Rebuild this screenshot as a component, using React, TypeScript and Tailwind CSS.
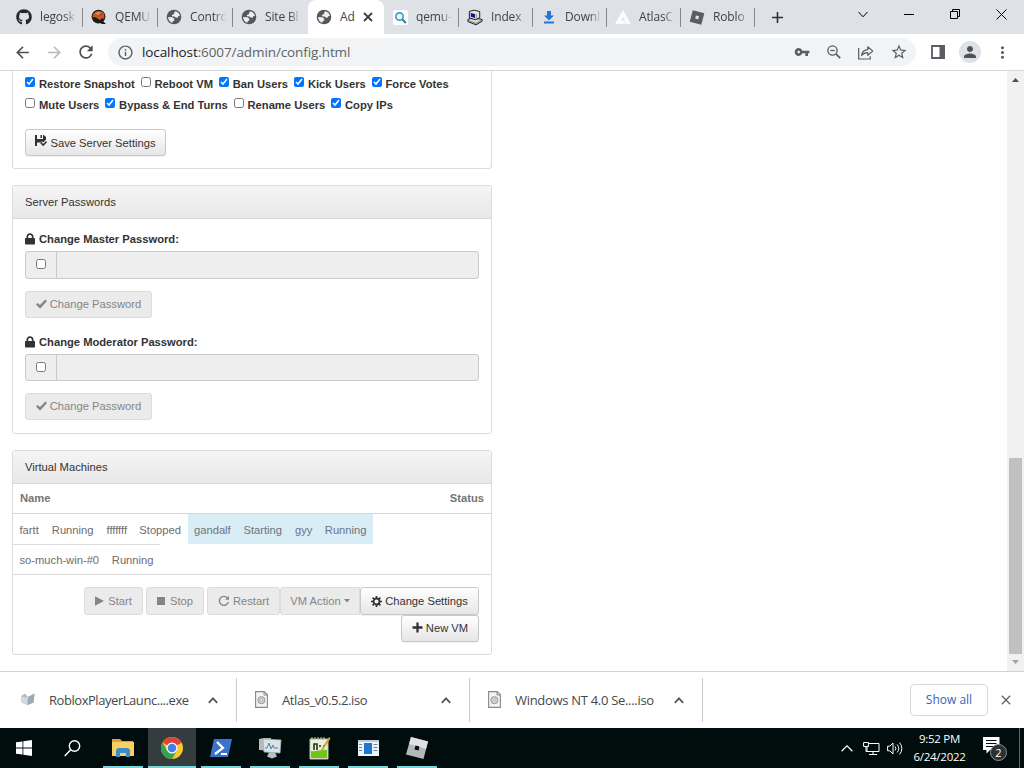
import { ReactNode } from "react";
import clsx from "clsx";
import { FaGithub } from "react-icons/fa";
import {
  MdAdd,
  MdArrowBack,
  MdArrowForward,
  MdClose,
  MdInfoOutline,
  MdMoreVert,
  MdPerson,
  MdRefresh,
  MdStarBorder,
  MdVpnKey,
} from "react-icons/md";

/* ---------- favicons ---------- */

const GlobeIcon = () => (
  <svg width="16" height="16" viewBox="0 0 16 16">
    <circle cx="8" cy="8" r="7.300" fill="#54575b" />
    <path d="M8.800 2.300c2.700.2 4.700 2 5.100 4.700l-1.700.3-.6 1.500-2.200-.2-.7-1.100H6.300L5.700 6l1.700-.6.8-1.200z" fill="#eceef0" />
    <path d="M2.100 8l4.300.3 1.900 1.500v1.700l-1.700.7v1.600C4.200 13.300 2.200 11.200 2.100 8z" fill="#eceef0" />
  </svg>
);

const QemuIcon = () => (
  <svg width="17" height="16" viewBox="0 0 17 16">
    <circle cx="8" cy="7.6" r="7.4" fill="#1d1a18" />
    <path d="M9 9l7 6.5h-5z" fill="#1d1a18" />
    <path d="M2 5.500C4 1.500 9 .6 12.500 3c2 1.500 2.300 4.500 1.300 6.500L11 9.500l-1.500 2L7 9.500 4 8 2 8.500C1.500 7.500 1.500 6.800 2 5.500z" fill="#c8562a" />
    <path d="M4 4.500c2-2 5-2.300 7-.8L8.500 5.500z" fill="#e58a4e" />
    <circle cx="10.500" cy="5.200" r="0.700" fill="#1d1a18" />
  </svg>
);

const QemuSearchIcon = () => (
  <svg width="15" height="15" viewBox="0 0 15 15">
    <rect width="15" height="15" rx="2" fill="#fff" />
    <circle cx="6.500" cy="6.500" r="3.700" fill="#eaf6fb" stroke="#3f9fc6" strokeWidth="1.700" />
    <path d="M9.300 9.300l3.500 3.700" stroke="#2b86ad" strokeWidth="2" />
  </svg>
);

const ComputerIcon = () => (
  <svg width="17" height="17" viewBox="0 0 17 17">
    <path d="M1 10.500l5-1.500 10 1.500v2l-6.500 3.800L1 12.800z" fill="#d9d9d9" stroke="#111" />
    <path d="M2.500 2L8 .7l5.500 1.500v6.500L9 10.800 2.500 9z" fill="#e4e4e4" stroke="#111" />
    <path d="M4 3.700l4.500 1v4.200L4 7.800z" fill="#14149a" />
    <path d="M9.800 4.600v6" stroke="#555" strokeWidth="0.700" />
    <path d="M2 12l7.500 2.800 6-3.500" fill="none" stroke="#555" strokeWidth="0.700" />
  </svg>
);

const DownloadIcon = () => (
  <svg width="10" height="13" viewBox="0 0 10 13">
    <path d="M3 0h4v4.500h3L5 9.500 0 4.500h3z" fill="#2477d4" />
    <rect y="10.500" width="10" height="2" fill="#2477d4" />
  </svg>
);

const AtlasIcon = () => (
  <svg width="16" height="14" viewBox="0 0 16 14">
    <path d="M8 0l8 14h-4.600L8 7.200 6 10.500h3.200l1.400 3.500H0z" fill="#fbfcfd" />
  </svg>
);

const RobloxTabIcon = () => (
  <svg width="17" height="17" viewBox="0 0 17 17">
    <path d="M4 .8l12.300 3.300L13 16.200.8 12.900z" fill="#5b5d60" />
    <path d="M7.400 6.300l3.300.9-.9 3.300-3.300-.9z" fill="#dee1e6" />
  </svg>
);

type Tab = { title: string; icon: ReactNode; width: string; divider?: boolean };

const tabs: Tab[] = [
  { title: "legosk", icon: <FaGithub className="size-4 text-[#24292f]" />, width: "w-[75px]", divider: true },
  { title: "QEMU", icon: <QemuIcon />, width: "w-[75px]", divider: true },
  { title: "Contro", icon: <GlobeIcon />, width: "w-[75px]", divider: true },
  { title: "Site Bl", icon: <GlobeIcon />, width: "w-[75px]" },
  { title: "Ad", icon: <GlobeIcon />, width: "w-[76px]" },
  { title: "qemu-", icon: <QemuSearchIcon />, width: "w-[75px]", divider: true },
  { title: "Index", icon: <ComputerIcon />, width: "w-[74px]", divider: true },
  { title: "Downl", icon: <DownloadIcon />, width: "w-[74px]", divider: true },
  { title: "AtlasC", icon: <AtlasIcon />, width: "w-[74px]", divider: true },
  { title: "Roblo", icon: <RobloxTabIcon />, width: "w-[74px]", divider: true },
];

const TabStrip = () => (
  <div className="flex h-[34px] bg-[#dee1e6] pl-2">
    {tabs.map((tab, i) => {
      const active = i === 4;
      return (
        <div
          key={tab.title}
          className={clsx(
            "flex shrink-0 items-center pl-2",
            tab.width,
            active && "rounded-t-lg bg-white"
          )}
        >
          <span className="flex w-[16px] shrink-0 justify-center">{tab.icon}</span>
          <span
            className={clsx(
              "ml-[8px] shrink-0 text-[12px] leading-4 tracking-[-0.15px] whitespace-nowrap text-[#3f4347]",
              active
                ? "w-[15px]"
                : "w-[37px] [mask-image:linear-gradient(to_right,#000_65%,transparent_98%)]"
            )}
          >
            {tab.title}
          </span>
          {active && (
            <svg width="10" height="10" viewBox="0 0 10 10" className="ml-[8px] shrink-0">
              <path d="M1 1l8 8M9 1L1 9" stroke="#3c4043" strokeWidth="1.800" />
            </svg>
          )}
          {tab.divider && <span className="ml-auto h-[19px] w-px bg-[#85888d]" />}
        </div>
      );
    })}
    <div className="flex w-[44px] items-center justify-center">
      <MdAdd className="size-[19px] text-[#2d3033]" />
    </div>
    <div className="mr-[17px] ml-auto flex h-7 items-center text-black">
      <svg width="10" height="7" viewBox="0 0 10 7" className="mr-[36px]">
        <path d="M.5 1L5 5.800 9.500 1" fill="none" stroke="currentColor" />
      </svg>
      <svg width="10" height="2" viewBox="0 0 10 2" className="mr-[36px]">
        <path d="M0 1.500h10" stroke="currentColor" />
      </svg>
      <svg width="10" height="10" viewBox="0 0 10 10" className="mr-[36px]">
        <path d="M.5 2.500h7v7h-7zM2.500 2.500v-2h7v7h-2" fill="none" stroke="currentColor" />
      </svg>
      <svg width="11" height="11" viewBox="0 0 11 11">
        <path d="M.5.5l10 10M10.500.5l-10 10" fill="none" stroke="currentColor" />
      </svg>
    </div>
  </div>
);

const Toolbar = () => (
  <div className="flex h-[37px] items-center border-b border-[#d5d7da] bg-white pl-[13px] text-[#5a5d61]">
    <MdArrowBack className="size-[19px] text-[#4b4e52]" />
    <MdArrowForward className="ml-[13px] size-[19px] text-[#b7b9bc]" />
    <MdRefresh className="ml-[12px] size-[20px] text-[#4b4e52]" />
    <div className="ml-[12px] flex h-7 w-[808px] items-center rounded-full bg-[#f1f3f4] pl-[9px]">
      <MdInfoOutline className="size-[17px]" />
      <span className="ml-[8px] text-[13.500px] tracking-[-0.1px] text-[#5f6368]">
        <span className="text-[#202124]">localhost</span>:6007/admin/config.html
      </span>
      <MdVpnKey className="ml-auto size-[16px]" />
      <svg width="14" height="14" viewBox="0 0 14 14" className="ml-[17px]">
        <g fill="none" stroke="currentColor" strokeWidth="1.300">
          <circle cx="5.500" cy="5.500" r="4.600" />
          <path d="M3.300 5.500h4.400" />
          <path d="M8.900 8.900l4.300 4.300" strokeWidth="1.700" />
        </g>
      </svg>
      <svg width="16" height="15" viewBox="0 0 16 15" className="ml-[17px]">
        <g fill="none" stroke="currentColor" strokeWidth="1.200">
          <path d="M.7 3v11h11.500v-2.800" />
          <path d="M3.600 10.500C4 6.500 6.500 4.800 9.800 4.600V1.800l5 4.300-5 4.200V7.700C7 7.700 5 8.500 3.600 10.500z" strokeLinejoin="round" />
        </g>
      </svg>
      <MdStarBorder className="mr-[8px] ml-[16px] size-[18px]" />
    </div>
    <svg width="14" height="14" viewBox="0 0 14 14" className="ml-[15px]">
      <path d="M1 1h12v12H1z" fill="none" stroke="currentColor" strokeWidth="1.800" />
      <path d="M8.500 0H14v14H8.500z" fill="currentColor" />
    </svg>
    <div className="ml-[14px] flex size-[22px] items-center justify-center rounded-full bg-[#dee1e6]">
      <MdPerson className="size-[18px] text-[#4d535c]" />
    </div>
    <MdMoreVert className="ml-[12px] size-[19px]" />
  </div>
);

/* ---------- glyphs used by the panel buttons ---------- */

const SavedGlyph = () => (
  <svg width="12" height="12" viewBox="0 0 12 12" fill="currentColor">
    <path d="M0 0h2v4h6V0h.8L11 2v2.500L8.200 7.500 7 6.300 5.500 7.500H2V11H0z" />
    <path d="M5.500 0H7v3H5.500zM5.200 8.300l1.300-1.200 1.700 1.800L11 6l1 1.200-3.800 4.100z" />
  </svg>
);

const LockGlyph = () => (
  <svg width="10" height="12" viewBox="0 0 10 12" fill="currentColor">
    <path d="M1.500 5V3.600C1.500 1.500 3 .2 5 .2s3.500 1.300 3.500 3.400V5H9.500l.5.500V11l-.5.500H.5L0 11V5.500L.5 5zM3.200 5h3.600V3.600C6.800 2.500 6 1.900 5 1.900s-1.800.6-1.800 1.700z" />
  </svg>
);

const OkGlyph = () => (
  <svg width="11" height="10" viewBox="0 0 11 10" fill="currentColor">
    <path d="M9.300.5L11 2 4.500 9.300H3.700L0 5.600l1.700-1.700L4 6z" />
  </svg>
);

const PlayGlyph = () => (
  <svg width="9" height="10" viewBox="0 0 9 10" fill="currentColor">
    <path d="M0 .3L9 5 0 9.700z" />
  </svg>
);

const StopGlyph = () => <span className="size-[8px] bg-current" />;

const RepeatGlyph = () => (
  <svg width="12" height="12" viewBox="0 0 12 12">
    <path d="M9.400 3A4.500 4.500 0 1 0 10.300 6.800" fill="none" stroke="currentColor" strokeWidth="1.400" />
    <path d="M11 .8v4H7.200z" fill="currentColor" />
  </svg>
);

const CogGlyph = () => (
  <svg width="11" height="11" viewBox="0 0 11 11">
    <circle cx="5.500" cy="5.500" r="3" fill="none" stroke="currentColor" strokeWidth="1.800" />
    <path
      d="M5.500 0v2M5.500 9v2M0 5.500h2M9 5.500h2M1.600 1.600L3 3M8 8l1.400 1.400M9.400 1.600L8 3M3 8L1.600 9.400"
      stroke="currentColor"
      strokeWidth="1.700"
    />
  </svg>
);

const PlusGlyph = () => (
  <svg width="11" height="11" viewBox="0 0 11 11">
    <path d="M5.500.5v10M.5 5.500h10" stroke="currentColor" strokeWidth="2.300" />
  </svg>
);

const Button = ({
  children,
  disabled,
  className,
}: {
  children: ReactNode;
  disabled?: boolean;
  className?: string;
}) => (
  <button
    type="button"
    disabled={disabled}
    className={clsx(
      "flex shrink-0 items-center justify-center gap-[3px] rounded-[3px] border whitespace-nowrap",
      disabled
        ? "border-[#dcdcdc] bg-[#ebebeb] text-[#858585]"
        : "border-[#c8c8c8] bg-linear-to-b from-white to-[#e6e6e6] text-[#333] shadow-[0_1px_1px_rgba(0,0,0,0.06)]",
      className
    )}
  >
    {children}
  </button>
);

const Check = ({ label, checked }: { label: string; checked?: boolean }) => (
  <label className="flex items-center gap-[4px] font-bold">
    <input type="checkbox" defaultChecked={checked} className="mt-0 mr-0 mb-[3px] ml-0 size-[10px]" />
    {label}
  </label>
);

const Heading = ({ children }: { children: ReactNode }) => (
  <div className="flex h-[33px] items-center border-b border-[#d9d9d9] bg-linear-to-b from-[#f5f5f5] to-[#e8e8e8] pb-px pl-3 text-[#333]">
    {children}
  </div>
);

const PasswordField = ({ label, height }: { label: string; height: string }) => (
  <div>
    <div className="flex h-[16px] items-center gap-[4px] font-bold">
      <LockGlyph />
      {label}
    </div>
    <div className={clsx("mt-[4px] flex rounded-[3px] border border-[#cacaca] bg-[#eee]", height)}>
      <div className="flex w-[31px] items-center justify-center border-r border-[#cacaca] pb-[2px]">
        <input type="checkbox" className="m-0 size-[10px]" />
      </div>
    </div>
    <Button disabled className="mt-[12px] h-[27px] w-[127px] pb-[2px]">
      <OkGlyph /> Change Password
    </Button>
  </div>
);

const VmCells = ({ name, status, width }: { name: string; status: string; width: string }) => (
  <div className={clsx("flex items-center justify-between px-[6.500px] pt-px", width)}>
    <span>{name}</span>
    <span>{status}</span>
  </div>
);

const AdminPage = () => (
  <main className="flex w-[1007px] flex-col bg-white pl-3 font-['Liberation_Sans',Arial,sans-serif] text-[11.2px] leading-4 text-[#333]">
    <section className="h-[98px] w-[480px] rounded-b-[3px] border border-t-0 border-[#dcdcdc] px-3 pt-[2px]">
      <div className="flex h-[21px] items-center gap-[5.800px]">
        <Check label="Restore Snapshot" checked />
        <Check label="Reboot VM" />
        <Check label="Ban Users" checked />
        <Check label="Kick Users" checked />
        <Check label="Force Votes" checked />
      </div>
      <div className="flex h-[21px] items-center gap-[5.800px]">
        <Check label="Mute Users" />
        <Check label="Bypass & End Turns" checked />
        <Check label="Rename Users" />
        <Check label="Copy IPs" checked />
      </div>
      <Button className="mt-[14px] h-[27px] w-[141px]">
        <span className="-mt-[3px]">
          <SavedGlyph />
        </span>
        Save Server Settings
      </Button>
    </section>

    <section className="mt-4 h-[249px] w-[480px] rounded-[3px] border border-[#dcdcdc]">
      <Heading>Server Passwords</Heading>
      <div className="flex flex-col gap-[16px] px-3 pt-[12px]">
        <PasswordField label="Change Master Password:" height="h-[28px]" />
        <PasswordField label="Change Moderator Password:" height="h-[27px]" />
      </div>
    </section>

    <section className="mt-4 h-[205px] w-[480px] rounded-[3px] border border-[#dcdcdc]">
      <Heading>Virtual Machines</Heading>
      <div className="text-[#6d6d6d]">
        <div className="flex h-[30px] items-center justify-between border-b border-[#d5d5d5] px-[7px] pb-px font-bold text-[#757575]">
          <span>Name</span>
          <span>Status</span>
        </div>
        <div className="flex h-[30px]">
          <div className="flex">
            <VmCells name="fartt" status="Running" width="w-[87px]" />
            <VmCells name="fffffff" status="Stopped" width="w-[87.500px]" />
          </div>
          <div className="flex bg-[#d9edf7] text-[#6a757b]">
            <VmCells name="gandalf" status="Starting" width="w-[101px]" />
            <VmCells name="gyy" status="Running" width="w-[84.500px]" />
          </div>
        </div>
        <div className="h-px w-[147px] bg-[#dcdcdc]" />
        <div className="flex h-[30px] border-b border-[#dcdcdc]">
          <VmCells name="so-much-win-#0" status="Running" width="w-[147px]" />
        </div>
      </div>
      <div className="flex flex-col items-end px-3 pt-[12px]">
        <div className="flex">
          <Button disabled className="mr-[3px] h-[28px] w-[59px] gap-[4px]">
            <PlayGlyph /> Start
          </Button>
          <Button disabled className="mr-[3px] h-[28px] w-[58px] gap-[5px]">
            <StopGlyph /> Stop
          </Button>
          <Button disabled className="h-[28px] w-[73px]">
            <RepeatGlyph /> Restart
          </Button>
          <Button disabled className="h-[28px] w-[80px] rounded-r-none">
            VM Action
            <svg width="6" height="4" viewBox="0 0 6 4">
              <path d="M0 0h6L3 3.500z" fill="currentColor" />
            </svg>
          </Button>
          <Button className="h-[28px] w-[119px]">
            <CogGlyph /> Change Settings
          </Button>
        </div>
        <Button className="h-[27px] w-[78px] pb-[2px]">
          <PlusGlyph /> New VM
        </Button>
      </div>
    </section>
  </main>
);

const Scrollbar = () => (
  <div className="flex w-[17px] flex-col items-center bg-[#f1f1f1]">
    <div className="flex h-[17px] items-center">
      <svg width="7" height="4" viewBox="0 0 7 4">
        <path d="M3.500 0L7 4H0z" fill="#505050" />
      </svg>
    </div>
    <div className="mt-[370px] h-[196px] w-[13px] bg-[#c1c1c1]" />
    <div className="flex h-[15px] items-center">
      <svg width="7" height="4" viewBox="0 0 7 4">
        <path d="M0 0h7L3.500 4z" fill="#a3a3a3" />
      </svg>
    </div>
  </div>
);

/* ---------- downloads shelf ---------- */

const RobloxFileIcon = () => (
  <svg width="16" height="16" viewBox="0 0 16 16">
    <path d="M1 5l4-2.500 3 3.500 6.500-3.500-1 9-6 2.500-6-2.500z" fill="#b3bdc4" />
    <path d="M1 5l3.500 1.500L8 6l-.5 8-6-2.500z" fill="#d3dade" />
    <path d="M8 6l6.500-3.500-1 9-6 2.500z" fill="#9caab3" />
  </svg>
);

const IsoIcon = () => (
  <svg width="13" height="17" viewBox="0 0 13 17">
    <path d="M.6.6h8.600l3.200 3.200v12.600H.6z" fill="#f4f4f4" stroke="#888" strokeWidth="1.100" />
    <path d="M9 .6V4h3.400" fill="none" stroke="#888" />
    <circle cx="6.400" cy="9.200" r="3.600" fill="#d0d0d0" stroke="#888" strokeWidth="0.800" />
    <circle cx="6.400" cy="9.200" r="1.200" fill="#f4f4f4" stroke="#999" strokeWidth="0.600" />
  </svg>
);

const ChevronUp = ({ className }: { className?: string }) => (
  <svg width="10" height="7" viewBox="0 0 10 7" className={className}>
    <path d="M.8 5.800L5 1.400l4.200 4.400" fill="none" stroke="#54575b" strokeWidth="1.800" />
  </svg>
);

const Download = ({ name, icon, width }: { name: string; icon: ReactNode; width: string }) => (
  <div className={clsx("flex h-[44px] items-center border-r border-[#c9cbce] pr-[18px]", width)}>
    <span className="flex w-[16px] justify-center pb-[2px]">{icon}</span>
    <span className="ml-[13px] pt-[2px] text-[13px] whitespace-nowrap text-[#45484c]">{name}</span>
    <ChevronUp className="ml-auto" />
  </div>
);

const DownloadShelf = () => (
  <div className="flex h-[57px] items-center border-t border-[#d0d2d5] bg-white">
    <Download name="RobloxPlayerLaunc....exe" icon={<RobloxFileIcon />} width="w-[237px] pl-[20px] tracking-[-0.45px]" />
    <Download name="Atlas_v0.5.2.iso" icon={<IsoIcon />} width="w-[233px] pl-[16px] tracking-[-0.4px]" />
    <Download name="Windows NT 4.0 Se....iso" icon={<IsoIcon />} width="w-[233px] pl-[16px] tracking-[-0.3px]" />
    <div className="mr-[10px] ml-auto flex items-center">
      <button
        type="button"
        className="h-8 w-[78px] rounded-[4px] border border-[#d5d8dc] pb-px text-[12px] font-medium text-[#3566b5]"
      >
        Show all
      </button>
      <MdClose className="ml-[10px] size-4 text-[#5f6368]" />
    </div>
  </div>
);

/* ---------- taskbar ---------- */

const ExplorerIcon = () => (
  <svg width="22" height="20" viewBox="0 0 22 20">
    <path d="M0 1h8l2 2h11v6H0z" fill="#dda236" />
    <path d="M0 4h22v14H0z" fill="#f8cf63" />
    <path d="M4 19v-7l2-2h10l2 2v7h-4v-4H8v4z" fill="#3b8ec5" />
  </svg>
);

const ChromeIcon = () => (
  <svg width="22" height="22" viewBox="0 0 22 22">
    <circle cx="11" cy="11" r="11" fill="#f7c92d" />
    <path d="M11 11L1.470 5.500A11 11 0 0 1 20.530 5.500z" fill="#dc4437" />
    <path d="M1.470 5.500A11 11 0 0 0 11 22l4.800-8.300L11 11 6.200 13.700z" fill="#31a350" />
    <path d="M11 5.500h9.530L11 11z" fill="#dc4437" />
    <circle cx="11" cy="11" r="5.500" fill="#fff" />
    <circle cx="11" cy="11" r="4.300" fill="#3f80e8" />
  </svg>
);

const PowerShellIcon = () => (
  <svg width="24" height="20" viewBox="0 0 24 20">
    <path d="M5 1h18l-4 18H1z" fill="#3b72cc" />
    <path d="M8 4l6 6-8 6" fill="none" stroke="#fff" strokeWidth="2.200" />
    <path d="M12 16h6" stroke="#fff" strokeWidth="2" />
  </svg>
);

const MonitorIcon = () => (
  <svg width="24" height="22" viewBox="0 0 24 22">
    <path d="M1 2l5-1h7v13L1 13z" fill="#b4bbbf" />
    <path d="M5 2l18 1-1 13-16-1z" fill="#dce3e7" stroke="#a7afb3" strokeWidth="0.800" />
    <path d="M7 11h2l2-5 2 6 2-4 1 3h4" fill="none" stroke="#4a87ac" />
    <path d="M11 15.500h6l2 4-5 2-5-2z" fill="#b9bfc2" />
  </svg>
);

const NotepadIcon = () => (
  <svg width="23" height="24" viewBox="0 0 23 24">
    <path d="M2 3h18v20H2z" fill="#eaf0d9" />
    <path d="M3 15c5 1 10-2 16-1v8H3z" fill="#71c41e" />
    <path d="M2 3h18v20H2z" fill="none" stroke="#b8c49c" />
    <path d="M4 1v3M7 1v3M10 1v3M13 1v3M16 1v3" stroke="#bcc8a8" />
    <path d="M6 14V8h3v6M11 10h2M15 10h1" fill="none" stroke="#263315" strokeWidth="1.600" />
    <path d="M21 1l1.500 1.500L15 14l-2 1.500.5-2.500z" fill="#d79b42" />
  </svg>
);

const WindowIcon = () => (
  <svg width="21" height="16" viewBox="0 0 21 16">
    <path d="M0 0h21v16H0z" fill="#edf3f8" />
    <path d="M0 0h21v2H0z" fill="#bccbd8" />
    <path d="M6 3h8v11H6z" fill="#1878d4" />
    <path d="M1 4.500h3M1 7.500h3M1 10.500h3M15.500 4.500h4M15.500 7.500h4M15.500 10.500h4" stroke="#6d8499" />
  </svg>
);

const RobloxIcon = () => (
  <svg width="22" height="22" viewBox="0 0 22 22">
    <path d="M5 0l17 4.500L17.500 22 0 17.500z" fill="#b4b8bb" />
    <path d="M5 0l17 4.500-2 7.500L3 7z" fill="#dfe2e4" />
    <path d="M9.500 8.500l4 1-1 4-4-1z" fill="#0a0d0d" />
  </svg>
);

const apps = [
  { name: "explorer", icon: <ExplorerIcon /> },
  { name: "chrome", icon: <ChromeIcon />, active: true },
  { name: "powershell", icon: <PowerShellIcon /> },
  { name: "monitor", icon: <MonitorIcon /> },
  { name: "notepad", icon: <NotepadIcon /> },
  { name: "window", icon: <WindowIcon /> },
  { name: "roblox", icon: <RobloxIcon /> },
];

const Taskbar = () => (
  <footer className="flex h-10 bg-[#010c0d] text-white">
    <div className="flex w-12 items-center justify-center">
      <svg width="16" height="16" viewBox="0 0 16 16" fill="#fff">
        <path d="M0 2.300L6.500 1.400v6.200H0zM7.300 1.300L16 0v7.600H7.300zM0 8.400h6.500v6.200L0 13.700zM7.300 8.400H16V16l-8.700-1.300z" />
      </svg>
    </div>
    <div className="flex w-[51px] items-center justify-center pr-[3px]">
      <svg width="17" height="17" viewBox="0 0 17 17">
        <g fill="none" stroke="#fff" strokeWidth="1.400">
          <circle cx="10.500" cy="6" r="5.200" />
          <path d="M6.700 9.700L.7 16" />
        </g>
      </svg>
    </div>
    <div className="flex gap-px">
      {apps.map((app) => (
        <div
          key={app.name}
          className={clsx("flex w-12 flex-col items-center", app.active && "bg-[#343c3d]")}
        >
          <div className="flex h-[38px] items-center pt-[2px]">{app.icon}</div>
          <div className={clsx("h-[2px] bg-[#76d5d8]", app.active ? "w-12" : "w-10")} />
        </div>
      ))}
    </div>
    <div className="ml-auto flex items-center">
      <svg width="12" height="7" viewBox="0 0 12 7">
        <path d="M.6 6.200L6 .9l5.400 5.300" fill="none" stroke="#fff" strokeWidth="1.200" />
      </svg>
      <svg width="17" height="15" viewBox="0 0 17 15" className="ml-[10px]">
        <path d="M5 2.500h11v8H4V6M10 10.500v3M6 13.500h8M.6 1.500h4.800v4H.6zM3 5.500v5h1" fill="none" stroke="#fff" />
      </svg>
      <svg width="17" height="15" viewBox="0 0 17 15" className="ml-[7px]">
        <path
          d="M.6 5.200h2.200L6 2v11L2.800 9.800H.6zM8 5.500a3 3 0 0 1 0 4M10.200 3.500a6 6 0 0 1 0 8M12.600 1.600a9 9 0 0 1 0 11.800"
          fill="none"
          stroke="#fff"
        />
      </svg>
      <div className="ml-[5px] w-[61px] text-center text-[11.500px] leading-[18px] tracking-[-0.25px] whitespace-nowrap">
        <div>9:52 PM</div>
        <div>6/24/2022</div>
      </div>
      <div className="relative ml-[13px] h-[23px] w-[25px]">
        <svg width="17" height="17" viewBox="0 0 17 17">
          <path d="M0 0h16.500v13H7l-3.500 3.500V13H0z" fill="#fff" />
          <path d="M3 3.500h10.500M3 6.500h10.500M3 9.500h7" stroke="#010c0d" />
        </svg>
        <span className="absolute top-[7px] left-[7px] flex size-[17px] items-center justify-center rounded-full border border-[#8c9091] bg-[#2b3233] text-[11px] leading-none">
          2
        </span>
      </div>
      <div className="ml-[11px] h-10 w-[5px] border-l border-[#5d6465]" />
    </div>
  </footer>
);

const App = () => (
  <div className="flex h-[768px] w-[1024px] flex-col overflow-hidden bg-white font-['Open_Sans','Noto_Sans',sans-serif]">
    <TabStrip />
    <Toolbar />
    <div className="flex h-[600px] justify-between">
      <AdminPage />
      <Scrollbar />
    </div>
    <DownloadShelf />
    <Taskbar />
  </div>
);

export default App;
